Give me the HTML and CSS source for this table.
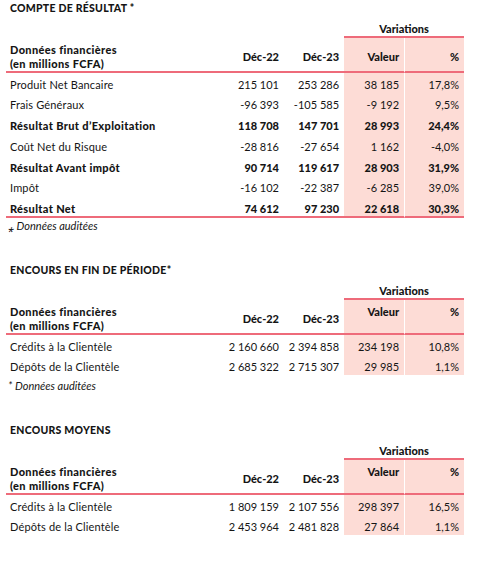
FILE: index.html
```html
<!DOCTYPE html>
<html lang="fr">

<head>
    <meta charset="UTF-8">
    <meta name="viewport" content="width=device-width, initial-scale=1.0">
    <title>Résultats financiers</title>
    <link rel="stylesheet" href="styles.css">
</head>

<body>
    <section class="block">
        <h2 class="title">COMPTE DE RÉSULTAT *</h2>
        <table class="fin">
            <colgroup>
                <col class="c-label"><col class="c-num"><col class="c-num"><col class="c-num"><col class="c-num">
            </colgroup>
            <tr class="var-row">
                <td colspan="3"></td>
                <th colspan="2" class="var">Variations</th>
            </tr>
            <tr class="head">
                <th class="label">Données financières<br>(en millions FCFA)</th>
                <th>Déc-22</th>
                <th>Déc-23</th>
                <th class="hl">Valeur</th>
                <th class="hl pct">%</th>
            </tr>
            <tr class="row">
                <td class="label">Produit Net Bancaire</td>
                <td>215 101</td><td>253 286</td><td class="hl">38 185</td><td class="hl pct">17,8%</td>
            </tr>
            <tr class="row">
                <td class="label">Frais Généraux</td>
                <td>-96 393</td><td>-105 585</td><td class="hl">-9 192</td><td class="hl pct">9,5%</td>
            </tr>
            <tr class="row strong">
                <td class="label">Résultat Brut d’Exploitation</td>
                <td>118 708</td><td>147 701</td><td class="hl">28 993</td><td class="hl pct">24,4%</td>
            </tr>
            <tr class="row">
                <td class="label">Coût Net du Risque</td>
                <td>-28 816</td><td>-27 654</td><td class="hl">1 162</td><td class="hl pct">-4,0%</td>
            </tr>
            <tr class="row strong">
                <td class="label">Résultat Avant impôt</td>
                <td>90 714</td><td>119 617</td><td class="hl">28 903</td><td class="hl pct">31,9%</td>
            </tr>
            <tr class="row">
                <td class="label">Impôt</td>
                <td>-16 102</td><td>-22 387</td><td class="hl">-6 285</td><td class="hl pct">39,0%</td>
            </tr>
            <tr class="row strong last">
                <td class="label">Résultat Net</td>
                <td>74 612</td><td>97 230</td><td class="hl">22 618</td><td class="hl pct">30,3%</td>
            </tr>
        </table>
        <p class="note note-first">⁎ Données auditées</p>
    </section>

    <section class="block">
        <h2 class="title">ENCOURS EN FIN DE PÉRIODE*</h2>
        <table class="fin short">
            <colgroup>
                <col class="c-label"><col class="c-num"><col class="c-num"><col class="c-num"><col class="c-num">
            </colgroup>
            <tr class="var-row">
                <td colspan="3"></td>
                <th colspan="2" class="var">Variations</th>
            </tr>
            <tr class="head">
                <th class="label">Données financières<br>(en millions FCFA)</th>
                <th>Déc-22</th>
                <th>Déc-23</th>
                <th class="hl top">Valeur</th>
                <th class="hl pct top">%</th>
            </tr>
            <tr class="row">
                <td class="label">Crédits à la Clientèle</td>
                <td>2 160 660</td><td>2 394 858</td><td class="hl">234 198</td><td class="hl pct">10,8%</td>
            </tr>
            <tr class="row">
                <td class="label">Dépôts de la Clientèle</td>
                <td>2 685 322</td><td>2 715 307</td><td class="hl">29 985</td><td class="hl pct">1,1%</td>
            </tr>
        </table>
        <p class="note">* Données auditées</p>
    </section>

    <section class="block">
        <h2 class="title">ENCOURS MOYENS</h2>
        <table class="fin short">
            <colgroup>
                <col class="c-label"><col class="c-num"><col class="c-num"><col class="c-num"><col class="c-num">
            </colgroup>
            <tr class="var-row">
                <td colspan="3"></td>
                <th colspan="2" class="var">Variations</th>
            </tr>
            <tr class="head">
                <th class="label">Données financières<br>(en millions FCFA)</th>
                <th>Déc-22</th>
                <th>Déc-23</th>
                <th class="hl top">Valeur</th>
                <th class="hl pct top">%</th>
            </tr>
            <tr class="row">
                <td class="label">Crédits à la Clientèle</td>
                <td>1 809 159</td><td>2 107 556</td><td class="hl">298 397</td><td class="hl pct">16,5%</td>
            </tr>
            <tr class="row">
                <td class="label">Dépôts de la Clientèle</td>
                <td>2 453 964</td><td>2 481 828</td><td class="hl">27 864</td><td class="hl pct">1,1%</td>
            </tr>
        </table>
    </section>
</body>

</html>
```

FILE: styles.css
```css
body {
    margin: 0;
    padding: 1px 6px 0;
    font-family: Lato, "Liberation Sans", sans-serif;
    font-size: 11px;
    color: #151515;
    background: #fff;
    display: flex;
    flex-direction: column;
    gap: 30px;
}

.title {
    margin: 0 0 7px;
    padding-left: 4px;
    font-size: 10.5px;
    font-weight: 900;
    letter-spacing: 0.25px;
    line-height: 14px;
}

.fin {
    border-collapse: separate;
    border-spacing: 0;
    table-layout: fixed;
    width: 458px;
}

.c-label {
    width: 218px;
}

.c-num {
    width: 60px;
}

.fin th,
.fin td {
    padding: 0 5px 0 0;
    line-height: 14px;
    text-align: right;
    white-space: nowrap;
}

.fin th {
    font-weight: 900;
}

.fin .label {
    text-align: left;
    padding-left: 4px;
    letter-spacing: 0.15px;
}

.fin th.label,
.row.strong .label {
    letter-spacing: 0.35px;
}

.var-row {
    height: 16px;
}

.var {
    text-align: center !important;
    padding: 0 !important;
    vertical-align: top;
    border-bottom: 2px solid #ee6b7a;
}

.head {
    height: 35px;
}

.head th {
    padding-top: 4px;
    vertical-align: middle;
    border-bottom: 2px solid #ee6b7a;
}

.short .head th {
    padding-top: 5px;
}

.short .head th.top {
    vertical-align: top;
}

.row {
    height: 20.8px;
}

.short .row {
    height: 20px;
}

.row td {
    padding-top: 4.5px;
    vertical-align: top;
}

.row.strong td {
    font-weight: 900;
}

.row.last {
    height: 20.2px;
}

.row.last td {
    border-bottom: 2px solid #ee6b7a;
}

.hl {
    background: #fddcd6;
}

.pct {
    border-left: 1px solid #fff;
}

.note {
    margin: 1px 0 0;
    padding-left: 2px;
    font-style: italic;
    line-height: 14px;
}

.short + .note {
    margin-top: 4px;
}
```
